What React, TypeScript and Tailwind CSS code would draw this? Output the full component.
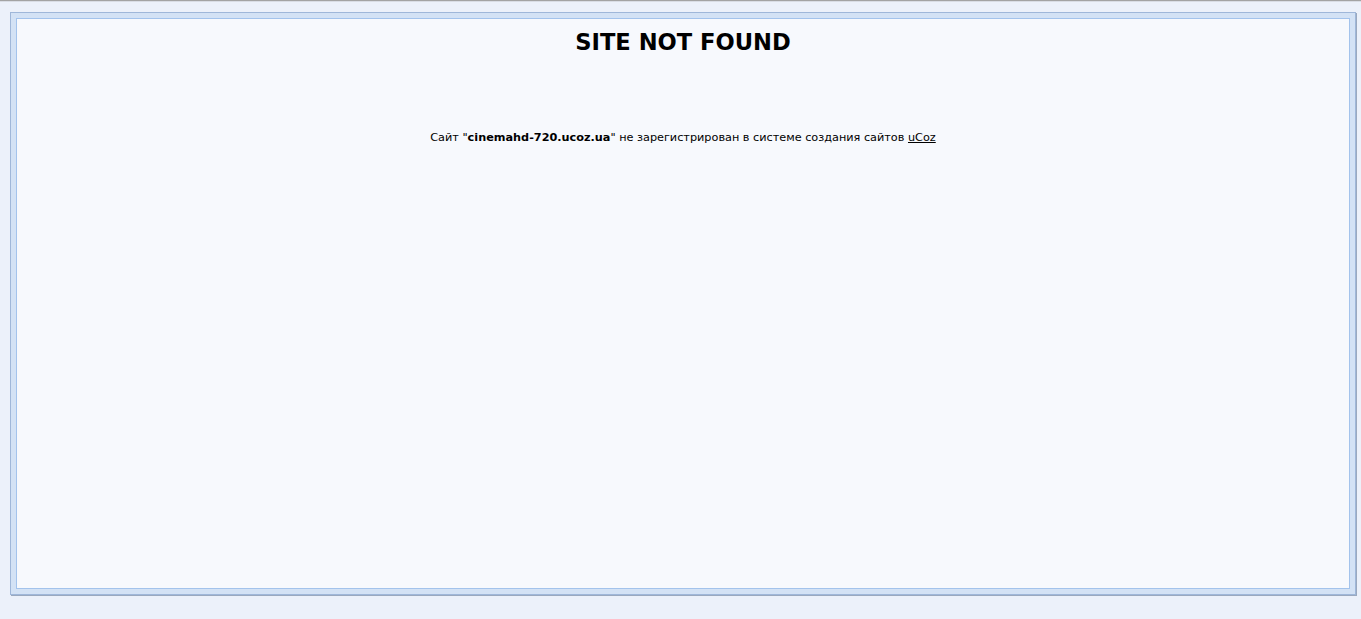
export default function App() {
  return (
    <div className="w-[1361px] h-[619px] bg-[#ecf1fa] flex flex-col" style={{ fontFamily: '"DejaVu Sans", Verdana, sans-serif' }}>
      <div className="h-px bg-[#a3a3a3]" />
      <div className="h-px bg-[#d9dde5]" />
      <div className="pt-[10px] pl-[10px] pr-[5px] pb-[24px] flex-1 flex">
        <div className="flex-1 flex border border-[#9fb7d9] bg-[#d3e2f5] p-[5px] shadow-[1px_1px_0_#9aa9bf]">
          <div className="flex-1 border border-[#a3c3ec] bg-[#f7f9fd] flex flex-col items-center">
            <h1 className="mt-[9px] text-[22.6px] leading-[28px] font-bold text-black">SITE NOT FOUND</h1>
            <p className="mt-[75px] text-[11.25px] leading-[14px] text-black">
              Сайт "<b>cinemahd-720.ucoz.ua</b>" не зарегистрирован в системе создания сайтов <u>uCoz</u>
            </p>
          </div>
        </div>
      </div>
    </div>
  );
}
